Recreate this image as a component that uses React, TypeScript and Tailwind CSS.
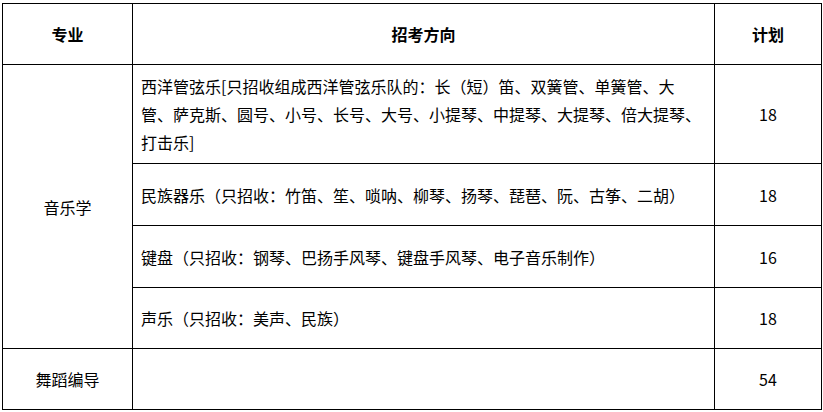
const rows = [
  {
    text: "西洋管弦乐[只招收组成西洋管弦乐队的：长（短）笛、双簧管、单簧管、大管、萨克斯、圆号、小号、长号、大号、小提琴、中提琴、大提琴、倍大提琴、打击乐]",
    plan: "18",
    h: "h-[99px]",
  },
  { text: "民族器乐（只招收：竹笛、笙、唢呐、柳琴、扬琴、琵琶、阮、古筝、二胡）", plan: "18", h: "h-[62px]" },
  { text: "键盘（只招收：钢琴、巴扬手风琴、键盘手风琴、电子音乐制作）", plan: "16", h: "h-[62px]" },
  { text: "声乐（只招收：美声、民族）", plan: "18", h: "h-[61px]" },
];

export default function App() {
  return (
    <div className="w-[823px] h-[412px] bg-white pt-[3px] pl-[2px] font-['Noto_Sans_CJK_SC',sans-serif] text-[16px] text-black">
      <table className="w-[819px] table-fixed border-collapse border border-black">
        <colgroup>
          <col className="w-[130px]" />
          <col className="w-[582px]" />
          <col className="w-[107px]" />
        </colgroup>
        <thead>
          <tr className="h-[61px]">
            <th className="border border-black font-bold text-center">专业</th>
            <th className="border border-black font-bold text-center">招考方向</th>
            <th className="border border-black font-bold text-center">计划</th>
          </tr>
        </thead>
        <tbody>
          {rows.map((r, i) => (
            <tr key={i} className={r.h}>
              {i === 0 && (
                <td rowSpan={4} className="border border-black text-center align-middle">
                  音乐学
                </td>
              )}
              <td className="border border-black px-2 leading-[28px] align-middle">{r.text}</td>
              <td className="border border-black text-center align-middle">{r.plan}</td>
            </tr>
          ))}
          <tr className="h-[61px]">
            <td className="border border-black text-center align-middle">舞蹈编导</td>
            <td className="border border-black"></td>
            <td className="border border-black text-center align-middle">54</td>
          </tr>
        </tbody>
      </table>
    </div>
  );
}
